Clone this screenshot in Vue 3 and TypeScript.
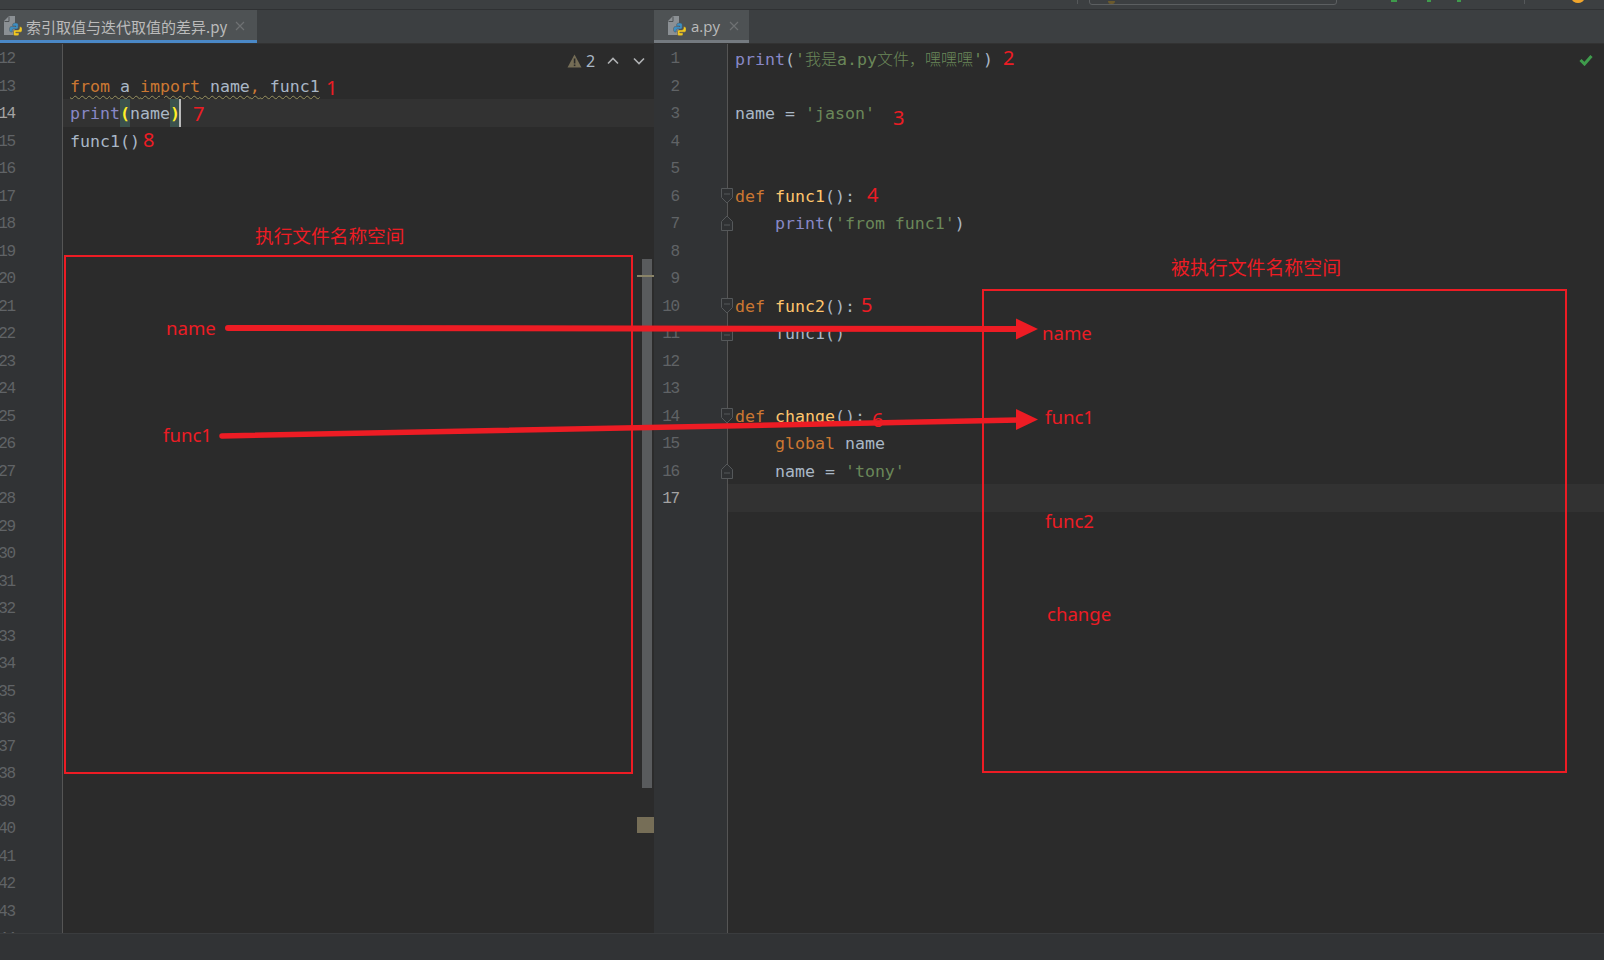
<script setup lang="ts">
type Token = { t: string; c?: string }
type Row = { n: number; tokens: Token[]; fold?: 'open' | 'end'; current?: boolean }

const kw = 'kw', fn = 'fn', bi = 'bi', st = 'st', br = 'br', cj = 'st cjk'

const leftCode: Record<number, Token[]> = {
  13: [{ t: 'from', c: kw }, { t: ' a ' }, { t: 'import', c: kw }, { t: ' name' }, { t: ',', c: kw }, { t: ' func1' }],
  14: [{ t: 'print', c: bi }, { t: '(', c: br }, { t: 'name' }, { t: ')', c: br }],
  15: [{ t: 'func1()' }],
}
const leftRows: Row[] = Array.from({ length: 33 }, (_, i) => ({
  n: 12 + i,
  tokens: leftCode[12 + i] ?? [],
  current: 12 + i === 14,
}))

const rightCode: Record<number, Token[]> = {
  1: [
    { t: 'print', c: bi }, { t: '(' }, { t: "'", c: st }, { t: '我是', c: cj }, { t: 'a.py', c: st },
    { t: '文件，嘿嘿嘿', c: cj }, { t: "'", c: st }, { t: ')' },
  ],
  3: [{ t: 'name = ' }, { t: "'jason'", c: st }],
  6: [{ t: 'def', c: kw }, { t: ' ' }, { t: 'func1', c: fn }, { t: '():' }],
  7: [{ t: '    ' }, { t: 'print', c: bi }, { t: '(' }, { t: "'from func1'", c: st }, { t: ')' }],
  10: [{ t: 'def', c: kw }, { t: ' ' }, { t: 'func2', c: fn }, { t: '():' }],
  11: [{ t: '    func1()' }],
  14: [{ t: 'def', c: kw }, { t: ' ' }, { t: 'change', c: fn }, { t: '():' }],
  15: [{ t: '    ' }, { t: 'global', c: kw }, { t: ' name' }],
  16: [{ t: '    name = ' }, { t: "'tony'", c: st }],
}
const folds: Record<number, 'open' | 'end'> = { 6: 'open', 7: 'end', 10: 'open', 11: 'end', 14: 'open', 16: 'end' }
const rightRows: Row[] = Array.from({ length: 32 }, (_, i) => ({
  n: i + 1,
  tokens: rightCode[i + 1] ?? [],
  fold: folds[i + 1],
  current: i + 1 === 17,
}))

const notes = [
  { t: '1', x: 326, y: 88, s: 20 },
  { t: '7', x: 193, y: 114, s: 20 },
  { t: '8', x: 143, y: 140, s: 20 },
  { t: '2', x: 1003, y: 58, s: 20 },
  { t: '3', x: 893, y: 118, s: 20 },
  { t: '4', x: 867, y: 195, s: 20 },
  { t: '5', x: 861, y: 305, s: 20 },
  { t: '6', x: 872, y: 420, s: 20 },
  { t: '执行文件名称空间', x: 255, y: 236, s: 18.7 },
  { t: '被执行文件名称空间', x: 1171, y: 268, s: 18.9 },
  { t: 'name', x: 166, y: 328, s: 18.6 },
  { t: 'func1', x: 163, y: 435, s: 18.6 },
  { t: 'name', x: 1042, y: 333, s: 18.6 },
  { t: 'func1', x: 1045, y: 417, s: 18.6 },
  { t: 'func2', x: 1045, y: 521, s: 18.6 },
  { t: 'change', x: 1047, y: 614, s: 18.6 },
]

const noteStyle = (n: { x: number; y: number; s: number }) => ({
  left: `${n.x}px`,
  top: `${n.y - 15}px`,
  fontSize: `${n.s}px`,
})
</script>

<template>
  <div class="ide">
    <header class="topbar">
      <span class="sep sep-a"></span>
      <span class="search"><i class="search-dot"></i></span>
      <i class="tick tick-a"></i>
      <i class="tick tick-b"></i>
      <i class="tick tick-c"></i>
      <span class="sep sep-b"></span>
      <i class="orange"></i>
    </header>

    <main class="panes">
      <section class="pane pane-left">
        <div class="tabbar">
          <div class="tab tab-active">
            <svg class="pyicon" viewBox="0 0 18 20" width="18" height="20">
              <path d="M0 5 L5 0 H11 V19 H0 Z" fill="#8b9094" />
              <path d="M5 0.5 V5.5 H0.5" fill="none" stroke="#4e5254" stroke-width="1" />
              <g transform="translate(5.5 7)">
                <path d="M6.3 0 C3 0 3.2 1.4 3.2 1.4 V3 H6.4 V3.6 H1.8 C1.8 3.6 0 3.4 0 6.3 C0 9.2 1.6 9 1.6 9 H2.7 V7.5 C2.7 7.5 2.6 5.9 4.2 5.9 H7.2 C7.2 5.9 8.7 5.9 8.7 4.4 V1.7 C8.7 1.7 8.9 0 6.3 0 Z" fill="#3d8fc4" stroke="#4e5254" stroke-width="0.5" />
                <path d="M6.4 12.8 C9.7 12.8 9.5 11.4 9.5 11.4 V9.8 H6.3 V9.2 H10.9 C10.9 9.2 12.7 9.4 12.7 6.5 C12.7 3.6 11.1 3.8 11.1 3.8 H10 V5.3 C10 5.3 10.1 6.9 8.5 6.9 H5.5 C5.5 6.9 4 6.9 4 8.4 V11.1 C4 11.1 3.8 12.8 6.4 12.8 Z" fill="#f2c81f" stroke="#4e5254" stroke-width="0.5" />
              </g>
            </svg>
            <span class="tab-title">索引取值与迭代取值的差异.py</span>
            <svg class="close" viewBox="0 0 10 10" width="10" height="10"><path d="M1 1 L9 9 M9 1 L1 9" /></svg>
          </div>
        </div>

        <div class="editor">
          <div class="gutter">
            <div v-for="r in leftRows" :key="r.n" class="gutter-row">
              <span class="num" :class="{ 'num-current': r.current }">{{ r.n }}</span>
            </div>
          </div>
          <div class="code">
            <div v-for="r in leftRows" :key="r.n" class="row" :class="{ 'row-current': r.current }">
              <span class="line-text" :class="{ squiggle: r.n === 13 }"><span v-for="(tk, i) in r.tokens" :key="i" :class="tk.c">{{ tk.t }}</span></span><i v-if="r.n === 14" class="caret"></i>
            </div>

            <div class="inspect">
              <svg viewBox="0 0 15 14" width="15" height="14">
                <path d="M7.5 0.5 L14.5 13.5 H0.5 Z" fill="#756d56" />
                <rect x="6.8" y="4.5" width="1.6" height="5" fill="#2b2b2b" />
                <rect x="6.8" y="10.5" width="1.6" height="1.6" fill="#2b2b2b" />
              </svg>
              <span class="inspect-num">2</span>
              <svg class="chev" viewBox="0 0 12 8" width="12" height="8"><path d="M1 6.5 L6 1.5 L11 6.5" /></svg>
              <svg class="chev" viewBox="0 0 12 8" width="12" height="8"><path d="M1 1.5 L6 6.5 L11 1.5" /></svg>
            </div>

            <div class="scroll-thumb"></div>
            <div class="scroll-tick"></div>
            <div class="scroll-mark"></div>
          </div>
        </div>
      </section>

      <section class="pane pane-right">
        <div class="tabbar">
          <div class="tab tab-second">
            <svg class="pyicon" viewBox="0 0 18 20" width="18" height="20">
              <path d="M0 5 L5 0 H11 V19 H0 Z" fill="#8b9094" />
              <path d="M5 0.5 V5.5 H0.5" fill="none" stroke="#4e5254" stroke-width="1" />
              <g transform="translate(5.5 7)">
                <path d="M6.3 0 C3 0 3.2 1.4 3.2 1.4 V3 H6.4 V3.6 H1.8 C1.8 3.6 0 3.4 0 6.3 C0 9.2 1.6 9 1.6 9 H2.7 V7.5 C2.7 7.5 2.6 5.9 4.2 5.9 H7.2 C7.2 5.9 8.7 5.9 8.7 4.4 V1.7 C8.7 1.7 8.9 0 6.3 0 Z" fill="#3d8fc4" stroke="#4e5254" stroke-width="0.5" />
                <path d="M6.4 12.8 C9.7 12.8 9.5 11.4 9.5 11.4 V9.8 H6.3 V9.2 H10.9 C10.9 9.2 12.7 9.4 12.7 6.5 C12.7 3.6 11.1 3.8 11.1 3.8 H10 V5.3 C10 5.3 10.1 6.9 8.5 6.9 H5.5 C5.5 6.9 4 6.9 4 8.4 V11.1 C4 11.1 3.8 12.8 6.4 12.8 Z" fill="#f2c81f" stroke="#4e5254" stroke-width="0.5" />
              </g>
            </svg>
            <span class="tab-title">a.py</span>
            <svg class="close" viewBox="0 0 10 10" width="10" height="10"><path d="M1 1 L9 9 M9 1 L1 9" /></svg>
          </div>
        </div>

        <div class="editor">
          <div class="gutter gutter-right">
            <div v-for="r in rightRows" :key="r.n" class="gutter-row">
              <span v-if="r.n <= 17" class="num" :class="{ 'num-current': r.current }">{{ r.n }}</span>
              <svg v-if="r.fold" class="fold" viewBox="0 0 12 16" width="12" height="16">
                <path v-if="r.fold === 'open'" d="M0.5 0.5 H11.5 V9.5 L6 15 L0.5 9.5 Z" />
                <path v-else d="M0.5 15.5 H11.5 V6.5 L6 1 L0.5 6.5 Z" />
                <path :d="r.fold === 'open' ? 'M3 6 H9' : 'M3 10 H9'" />
              </svg>
            </div>
          </div>
          <div class="code">
            <div v-for="r in rightRows" :key="r.n" class="row" :class="{ 'row-current': r.current }">
              <span class="line-text"><span v-for="(tk, i) in r.tokens" :key="i" :class="tk.c">{{ tk.t }}</span></span>
            </div>
            <svg class="check" viewBox="0 0 14 12" width="14" height="12"><path d="M1.5 6 L5.5 10 L12.5 2" /></svg>
          </div>
        </div>
      </section>
    </main>

    <footer class="status"></footer>

    <div class="overlay">
      <div class="box box-left"></div>
      <div class="box box-right"></div>
      <span v-for="(n, i) in notes" :key="i" class="note" :style="noteStyle(n)">{{ n.t }}</span>
      <svg class="arrows" viewBox="0 0 1604 960" width="1604" height="960">
        <path class="shaft-a" d="M228 328 L1020 329" />
        <path class="shaft-b" d="M222 436 L1020 420" />
        <polygon points="1016,318.5 1038,329 1016,339.5" />
        <polygon points="1016,409 1038,419.5 1016,430" />
      </svg>
    </div>
  </div>
</template>

<style scoped>
.ide {
  position: relative;
  width: 1604px;
  height: 960px;
  display: flex;
  flex-direction: column;
  overflow: hidden;
  background: #3c3f41;
}

.topbar {
  position: relative;
  flex: 0 0 10px;
  box-sizing: border-box;
  background: #3c3f41;
  border-bottom: 1px solid #2f3133;
  overflow: hidden;
}
.sep { position: absolute; top: 0; width: 1px; height: 4px; background: #55585a; }
.sep-a { left: 1077px; }
.sep-b { left: 1524px; }
.search {
  position: absolute;
  left: 1089px;
  top: -10px;
  width: 248px;
  height: 15px;
  box-sizing: border-box;
  border: 1px solid #5c5f61;
  border-radius: 3px;
}
.search-dot { position: absolute; left: 18px; top: 10px; width: 7px; height: 3px; background: #6b5a2c; border-radius: 0 0 4px 4px; }
.tick { position: absolute; top: 0; width: 4px; height: 2px; background: #3f9b4c; }
.tick-a { left: 1391px; width: 6px; }
.tick-b { left: 1427px; }
.tick-c { left: 1457px; }
.orange { position: absolute; left: 1572px; top: -5px; width: 12px; height: 8px; border-radius: 50%; background: #f0a52c; }

.panes { flex: 1; display: flex; min-height: 0; }
.pane { display: flex; flex-direction: column; min-width: 0; }
.pane-left { flex: 0 0 654px; }
.pane-right { flex: 1; }

.tabbar {
  flex: 0 0 34px;
  box-sizing: border-box;
  background: #3c3f41;
  border-bottom: 1px solid #323232;
  display: flex;
}
.tab {
  display: flex;
  align-items: center;
  box-sizing: border-box;
  height: 33px;
  padding-top: 2px;
  background: #4e5254;
  color: #bbbbbb;
  font-family: "Noto Sans CJK SC", "Noto Sans", sans-serif;
  font-size: 15px;
}
.tab-active { width: 257px; padding-left: 4px; border-bottom: 3px solid #4a88c7; }
.tab-second { width: 95px; padding-left: 14px; border-bottom: 3px solid #747a80; }
.pyicon { flex: none; }
.tab-title { margin-left: 4px; white-space: nowrap; }
.tab-active .tab-title { width: 204px; }
.tab-second .tab-title { width: 33px; margin-left: 5px; font-family: "Open Sans", sans-serif; }
.close { margin-left: 5px; flex: none; }
.close path { fill: none; stroke: #6e7173; stroke-width: 1.2; }

.editor { flex: 1; display: flex; min-height: 0; overflow: hidden; }

.gutter {
  flex: 0 0 63px;
  box-sizing: border-box;
  background: #313335;
  border-right: 1px solid #555555;
  overflow: hidden;
}
.gutter-right { flex: 0 0 74px; overflow: visible; position: relative; z-index: 1; }
.gutter-row {
  position: relative;
  height: 27.5px;
  display: flex;
  align-items: center;
  padding-top: 3px;
  box-sizing: border-box;
}
.num {
  width: 15px;
  display: flex;
  justify-content: flex-end;
  white-space: nowrap;
  font-family: "Liberation Mono", monospace;
  font-size: 16px;
  letter-spacing: -1.2px;
  color: #606366;
}
.gutter-right .num { width: 25px; }
.num-current { color: #a4a3a3; }
.fold { position: absolute; left: 67px; top: 6px; }
.fold path { fill: #2f3133; stroke: #55585a; stroke-width: 1; }

.code {
  position: relative;
  flex: 1;
  min-width: 0;
  background: #2b2b2b;
  overflow: hidden;
  font-family: "DejaVu Sans Mono", "Noto Sans CJK SC", monospace;
  font-size: 16.6px;
  color: #a9b7c6;
}
.row {
  box-sizing: border-box;
  height: 27.5px;
  line-height: 29.5px;
  padding-left: 7px;
  white-space: pre;
  display: flex;
  align-items: flex-start;
}
.row-current { background: #323232; }
.line-text { white-space: pre; height: 27.5px; }
.squiggle {
  text-decoration: underline wavy #98915f 1px;
  text-underline-offset: 3px;
}
.kw { color: #cc7832; }
.fn { color: #ffc66d; }
.bi { color: #8888c6; }
.st { color: #6a8759; }
.cjk { font-size: 16px; font-family: "Noto Sans CJK SC", sans-serif; font-weight: 300; }
.br {
  display: inline-block;
  height: 27.5px;
  color: #ffef28;
  font-weight: 700;
  background: #3b514d;
}
.caret { width: 2px; height: 27.5px; background: #bbbbbb; flex: none; margin-left: -1px; }

.inspect {
  position: absolute;
  top: 10px;
  left: 504px;
  display: flex;
  align-items: center;
  height: 14px;
  font-family: "Noto Sans", sans-serif;
  font-size: 16px;
  color: #a9b7c6;
}
.inspect-num { margin-left: 4px; width: 21px; }
.chev { margin-right: 14px; }
.chev path { fill: none; stroke: #afb1b3; stroke-width: 1.6; }

.scroll-thumb { position: absolute; left: 579px; top: 215px; width: 10px; height: 529px; background: #595b5d; }
.scroll-tick { position: absolute; left: 574px; top: 231px; width: 17px; height: 2px; background: #8a8468; }
.scroll-mark { position: absolute; left: 574px; top: 773px; width: 17px; height: 16px; background: #766e57; }

.check { position: absolute; right: 11px; top: 10px; }
.check path { fill: none; stroke: #3f9b4c; stroke-width: 3; }

.status {
  flex: 0 0 27px;
  box-sizing: border-box;
  background: #313335;
  border-top: 1px solid #3a3c3e;
}

.overlay { position: absolute; inset: 0; z-index: 2; pointer-events: none; }
.box { position: absolute; box-sizing: border-box; border: 2px solid #ed1c24; }
.box-left { left: 64px; top: 255px; width: 569px; height: 519px; }
.box-right { left: 982px; top: 289px; width: 585px; height: 484px; }
.note {
  position: absolute;
  line-height: 30px;
  white-space: nowrap;
  color: #ed1c24;
  font-family: "Noto Sans", "Noto Sans CJK SC", sans-serif;
  font-weight: 400;
}
.arrows { position: absolute; left: 0; top: 0; }
.arrows path { fill: none; stroke: #ed1c24; stroke-linecap: round; }
.shaft-a { stroke-width: 6; }
.shaft-b { stroke-width: 5.5; }
.arrows polygon { fill: #ed1c24; }
</style>
